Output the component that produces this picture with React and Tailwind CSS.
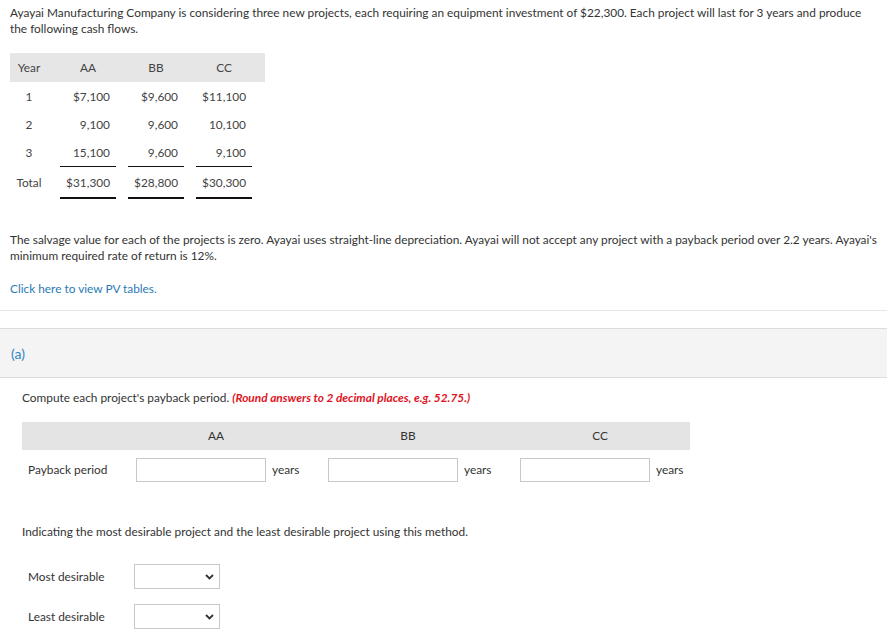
import React from "react";

const rows = [
  { y: "1", aa: "$7,100", bb: "$9,600", cc: "$11,100" },
  { y: "2", aa: "9,100", bb: "9,600", cc: "10,100" },
  { y: "3", aa: "15,100", bb: "9,600", cc: "9,100" },
];

function Chevron() {
  return (
    <svg width="9" height="6" viewBox="0 0 9 6" className="pointer-events-none absolute right-[6px] top-[10px]">
      <path d="M1 1l3.5 3.5L8 1" fill="none" stroke="#333" strokeWidth="1.8" />
    </svg>
  );
}

function Select() {
  return (
    <div className="relative w-[86px] h-[25px]">
      <select className="appearance-none w-full h-full border border-[#c8c8c8] bg-white rounded-none outline-none" defaultValue="">
        <option value=""></option>
        <option>AA</option>
        <option>BB</option>
        <option>CC</option>
      </select>
      <Chevron />
    </div>
  );
}

function Cell({ children, last, bottom }) {
  return (
    <div className="w-[68px] px-[6px]">
      <div
        className={
          "text-right pr-[6px] " +
          (last ? "h-[28px] leading-[28px] border-b-[1px] border-[#111]" : bottom ? "h-[32px] pt-[6px] leading-[20px] border-b-[2px] border-[#111]" : "h-[28px] leading-[28px]")
        }
      >
        {children}
      </div>
    </div>
  );
}

export default function App() {
  return (
    <div className="w-[887px] bg-white text-[11.85px] text-[#333] font-['Lato','Liberation_Sans',sans-serif]">
      <div className="px-[10px] pt-[5px] pb-[13px] border-b border-[#e6e6e6] pr-[6px]">
        <p className="leading-[16px]">
          Ayayai Manufacturing Company is considering three new projects, each requiring an equipment investment of $22,300. Each project will last for 3 years and produce the following cash flows.
        </p>

        <div className="mt-[16px] w-[255px] text-[#444]">
          <div className="flex h-[29px] items-center bg-[#e6e6e6]">
            <div className="w-[44px] pr-[6px] text-center">Year</div>
            <div className="w-[68px] text-center">AA</div>
            <div className="w-[68px] text-center">BB</div>
            <div className="w-[68px] text-center">CC</div>
          </div>
          <div className="pt-[1px]">
            {rows.map((r, i) => (
              <div key={r.y} className="flex">
                <div className="w-[44px] pr-[6px] text-center leading-[28px]">{r.y}</div>
                <Cell last={i === 2}>{r.aa}</Cell>
                <Cell last={i === 2}>{r.bb}</Cell>
                <Cell last={i === 2}>{r.cc}</Cell>
              </div>
            ))}
            <div className="flex">
              <div className="w-[44px] pr-[6px] text-center pt-[6px] leading-[20px]">Total</div>
              <Cell bottom>$31,300</Cell>
              <Cell bottom>$28,800</Cell>
              <Cell bottom>$30,300</Cell>
            </div>
          </div>
        </div>

        <p className="mt-[33px] leading-[16px]">
          The salvage value for each of the projects is zero. Ayayai uses straight-line depreciation. Ayayai will not accept any project with a payback period over 2.2 years. Ayayai's minimum required rate of return is 12%.
        </p>
        <p className="mt-[17px] leading-[16px] text-[#2a7ab5]">Click here to view PV tables.</p>
      </div>

      <div className="h-[17px]" />
      <div className="h-[50px] border-t border-b border-[#dcdcdc] bg-[#f4f4f4] flex items-center px-[11px]">
        <span className="text-[#2f86c4] text-[14px]">(a)</span>
      </div>

      <div className="px-[22px]">
        <p className="mt-[12px] leading-[16px]">
          Compute each project's payback period.{" "}
          <span className="text-[#e0141e] font-bold italic">(Round answers to 2 decimal places, e.g. 52.75.)</span>
        </p>

        <div className="mt-[16px] text-[#333]">
          <div className="flex w-[668px] h-[28px] items-center bg-[#e4e4e4]">
            <div className="w-[114px] shrink-0" />
            <div className="w-[160px] shrink-0 mr-[32px] text-center">AA</div>
            <div className="w-[160px] shrink-0 mr-[32px] text-center">BB</div>
            <div className="w-[160px] shrink-0 text-center">CC</div>
          </div>
          <div className="flex items-center h-[40px]">
            <div className="w-[114px] shrink-0 pl-[6px]">Payback period</div>
            {["aa", "bb", "cc"].map((k) => (
              <div key={k} className="w-[192px] shrink-0 flex items-center">
                <input className="w-[130px] h-[24px] border border-[#c8c8c8] outline-none" />
                <span className="ml-[6px]">years</span>
              </div>
            ))}
          </div>
        </div>

        <p className="mt-[34px] leading-[16px]">Indicating the most desirable project and the least desirable project using this method.</p>

        <div className="mt-[24px] flex items-center">
          <div className="w-[112px] pl-[6px]">Most desirable</div>
          <Select />
        </div>
        <div className="mt-[15px] flex items-center">
          <div className="w-[112px] pl-[6px]">Least desirable</div>
          <Select />
        </div>
      </div>
    </div>
  );
}
